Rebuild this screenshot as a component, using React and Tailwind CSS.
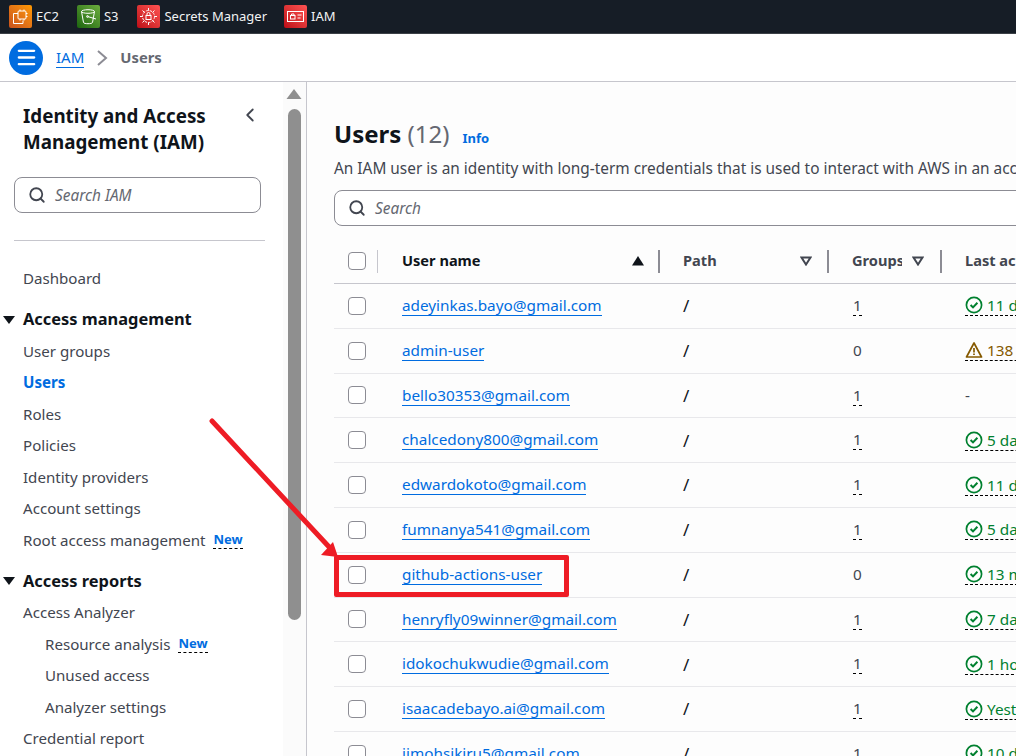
import { Menu, ChevronLeft, Search } from "lucide-react";

const usuarios = [
  { nome: "adeyinkas.bayo@gmail.com", grupos: "1", ativo: "11 days ago", status: "ok" },
  { nome: "admin-user", grupos: "0", ativo: "138 days ago", status: "aviso" },
  { nome: "bello30353@gmail.com", grupos: "1", ativo: "-", status: "nenhum" },
  { nome: "chalcedony800@gmail.com", grupos: "1", ativo: "5 days ago", status: "ok" },
  { nome: "edwardokoto@gmail.com", grupos: "1", ativo: "11 days ago", status: "ok" },
  { nome: "fumnanya541@gmail.com", grupos: "1", ativo: "5 days ago", status: "ok" },
  { nome: "github-actions-user", grupos: "0", ativo: "13 minutes ago", status: "ok" },
  { nome: "henryfly09winner@gmail.com", grupos: "1", ativo: "7 days ago", status: "ok" },
  { nome: "idokochukwudie@gmail.com", grupos: "1", ativo: "1 hour ago", status: "ok" },
  { nome: "isaacadebayo.ai@gmail.com", grupos: "1", ativo: "Yesterday", status: "ok" },
  { nome: "jimohsikiru5@gmail.com", grupos: "1", ativo: "10 days ago", status: "ok" },
];

function ServiceIcon({ cor, children }) {
  return (
    <span className={`flex h-[23px] w-[23px] shrink-0 items-center justify-center rounded-[2px] ${cor}`}>
      <svg width="19" height="19" viewBox="0 0 19 19" fill="none" stroke="#ffffff" strokeWidth="1">
        {children}
      </svg>
    </span>
  );
}

function Service({ cor, label, icon, className }) {
  return (
    <div className={`flex items-center gap-[4px] ${className}`}>
      <ServiceIcon cor={cor}>{icon}</ServiceIcon>
      <span className="text-[13px] text-[#f2f3f3]">{label}</span>
    </div>
  );
}

function NavItem({ children, sub, ativo, novo }) {
  return (
    <div className={`flex h-[31.5px] items-center text-[15.1px] ${sub ? "pl-[45px]" : "pl-[23px]"} ${ativo ? "font-bold text-[#006ce0]" : "text-[#424650]"}`}>
      {children}
      {novo && (
        <span className={`border-b border-dashed border-black text-[13px] leading-[17px] font-bold text-[#006ce0] ${novo}`}>
          New
        </span>
      )}
    </div>
  );
}

function NavHeader({ children, className }) {
  return (
    <div className={`flex h-[32px] items-center text-[16.4px] font-bold text-[#0f141a] ${className}`}>
      <svg width="14" height="10" viewBox="0 0 14 10" className="ml-[2px] mr-[7px]">
        <path d="M1 1h12L7 9z" fill="#0f141a" />
      </svg>
      {children}
    </div>
  );
}

function Checkbox() {
  return <span className="block h-[18px] w-[18px] rounded-[4px] border border-[#8c8c94] bg-white" />;
}

function FilterIcon() {
  return (
    <svg width="12" height="10" viewBox="0 0 12 10" fill="none" stroke="#424650" strokeWidth="2">
      <path d="M1.5 1.5h9L6 8.5z" />
    </svg>
  );
}

function StatusIcon({ status }) {
  if (status === "aviso") {
    return (
      <svg width="18" height="18" viewBox="0 0 18 18" fill="none" stroke="#855900" strokeWidth="1.7">
        <path d="M9 2 1.5 16h15z" strokeLinejoin="round" />
        <path d="M9 7v4.5M9 12.6v1.4" />
      </svg>
    );
  }
  return (
    <svg width="18" height="18" viewBox="0 0 18 18" fill="none" stroke="#00802f" strokeWidth="1.7">
      <circle cx="9" cy="9" r="7.6" />
      <path d="m5.6 9 2.4 2.4 4.4-4.6" strokeWidth="2" />
    </svg>
  );
}

export default function App() {
  return (
    <div className="relative h-[756px] w-[1016px] overflow-hidden bg-white font-['Noto_Sans',sans-serif]">
      <div className="flex h-[34px] items-center border-b border-[#3b4046] bg-[#161d26] pl-[9px]">
        <Service
          cor="bg-gradient-to-tr from-[#c8511b] to-[#f90]"
          label="EC2"
          className="mr-[18px]"
          icon={
            <>
              <rect x="7" y="4" width="8" height="8" rx="1" />
              <path d="M9 4V2.5M13 4V2.5M9 12v1.5M13 12v1.5M15 6.5h1.5M15 9.5h1.5M7 6.5H2.5v10H12v-3" />
            </>
          }
        />
        <Service
          cor="bg-gradient-to-tr from-[#1b660f] to-[#6cae3e]"
          label="S3"
          className="mr-[19px]"
          icon={
            <>
              <ellipse cx="9" cy="4.5" rx="6.5" ry="1.8" />
              <path d="M2.5 4.5 4.5 15.5c.5 1.6 8.5 1.6 9 0l2-11" />
              <path d="M8.5 9.5 17 12" />
              <circle cx="8.5" cy="9.5" r=".9" />
            </>
          }
        />
        <Service
          cor="bg-gradient-to-tr from-[#bd0816] to-[#ff5252]"
          label="Secrets Manager"
          className="mr-[17px]"
          icon={
            <>
              <circle cx="9.5" cy="9.5" r="6" strokeDasharray="2.4 1.2" />
              <path d="M9.5 1v2.5M9.5 15.5V18M1 9.5h2.5M15.5 9.5H18M3.5 3.5l2 2M13.5 13.5l2 2M15.5 3.5l-2 2M5.5 13.5l-2 2" />
              <rect x="7" y="8.5" width="5" height="4" />
              <path d="M8 8.5V7a1.5 1.5 0 0 1 3 0v1.5" />
            </>
          }
        />
        <Service
          cor="bg-gradient-to-tr from-[#bd0816] to-[#ff5252]"
          label="IAM"
          icon={
            <>
              <rect x="1.5" y="4.5" width="16" height="10" />
              <rect x="4.5" y="8.5" width="4.5" height="3.5" />
              <path d="M5.5 8.5V7h2.5v1.5M11.5 8h4M11.5 11h3" />
            </>
          }
        />
      </div>

      <div className="flex h-[48px] items-center border-b border-[#c6c6cd] pl-[9px]">
        <span className="flex h-[34px] w-[34px] items-center justify-center rounded-full bg-[#006ce0]">
          <Menu size={23} color="#ffffff" strokeWidth={2.4} />
        </span>
        <span className="mb-[1px] ml-[13px] border-b border-[#006ce0] text-[15px] leading-[20px] text-[#006ce0]">IAM</span>
        <svg width="12" height="18" viewBox="0 0 12 18" fill="none" stroke="#8c8c94" strokeWidth="2" className="mr-[12px] ml-[12px]">
          <path d="M2 2l8 7-8 7" />
        </svg>
        <span className="mb-[1px] text-[14.8px] font-bold text-[#656871]">Users</span>
      </div>

      <div className="flex h-[674px]">
        <aside className="w-[283px] shrink-0 bg-white">
          <div className="flex justify-between pt-[22px] pr-[22px] pl-[23px]">
            <h2 className="text-[18.8px] leading-[25.5px] font-bold text-[#0f141a]">
              Identity and Access
              <br />
              Management (IAM)
            </h2>
            <ChevronLeft size={22} color="#424650" strokeWidth={2} />
          </div>
          <div className="mx-[14px] mt-[22px] flex h-[36px] w-[247px] items-center rounded-[8px] border border-[#8c8c94] pl-[13px]">
            <Search size={18} color="#424650" strokeWidth={2.4} />
            <span className="mt-[2px] ml-[9px] text-[15.4px] text-[#656871] italic">Search IAM</span>
          </div>
          <div className="mx-[14px] mt-[27px] h-px w-[251px] bg-[#c6c6cd]" />
          <div className="pt-[22px]">
            <NavItem>Dashboard</NavItem>
            <NavHeader className="mt-[9px]">Access management</NavHeader>
            <NavItem>User groups</NavItem>
            <NavItem ativo>Users</NavItem>
            <NavItem>Roles</NavItem>
            <NavItem>Policies</NavItem>
            <NavItem>Identity providers</NavItem>
            <NavItem>Account settings</NavItem>
            <NavItem novo="ml-[8px]">Root access management</NavItem>
            <NavHeader className="mt-[9px]">Access reports</NavHeader>
            <NavItem>Access Analyzer</NavItem>
            <NavItem sub novo="ml-[8px]">Resource analysis</NavItem>
            <NavItem sub>Unused access</NavItem>
            <NavItem sub>Analyzer settings</NavItem>
            <NavItem>Credential report</NavItem>
          </div>
        </aside>

        <div className="flex w-[23px] shrink-0 flex-col items-center bg-[#fbfbfb] pr-[1px]">
          <svg width="16" height="11" viewBox="0 0 16 11" className="mt-[7px]">
            <path d="M8 0l7.5 10H.5z" fill="#8f8f8f" />
          </svg>
          <div className="mt-[9px] h-[511px] w-[13px] rounded-full bg-[#8f8f8f]" />
        </div>

        <main className="w-[710px] shrink-0 overflow-hidden border-l border-[#c6c6cd] bg-[#fdfdfd] pl-[27px]">
          <div className="mt-[33px] flex h-[38px] items-center">
            <h1 className="text-[24px] font-bold whitespace-nowrap text-[#0f141a]">
              Users <span className="font-normal text-[#656871]">(12)</span>
            </h1>
            <span className="mt-[10px] ml-[13px] text-[13px] font-bold text-[#006ce0]">Info</span>
          </div>
          <p className="mt-[6px] text-[15.4px] leading-[20px] whitespace-nowrap text-[#424650]">
            An IAM user is an identity with long-term credentials that is used to interact with AWS in an account.
          </p>
          <div className="mt-[11px] flex h-[36px] w-[720px] items-center rounded-[8px] border border-[#8c8c94] bg-white pl-[13px]">
            <Search size={18} color="#424650" strokeWidth={2.4} />
            <span className="mt-[2px] ml-[9px] text-[15.4px] text-[#656871] italic">Search</span>
          </div>

          <div className="mt-[14px] w-[720px]">
            <div className="flex h-[44px] items-center border-b border-[#c6c6cd] pb-[1px] text-[14.6px] font-bold">
              <div className="flex w-[68px] shrink-0 items-center pl-[14px]">
                <Checkbox />
                <span className="ml-[11px] h-[23px] w-px bg-[#c6c6cd]" />
              </div>
              <div className="flex w-[258px] shrink-0 items-center justify-between text-[#0f141a]">
                User name
                <span className="flex items-center gap-[14px]">
                  <svg width="12" height="10" viewBox="0 0 12 10"><path d="M6 0l6 9.5H0z" fill="#0f141a" /></svg>
                  <span className="h-[23px] w-[2px] bg-[#8c8c94]" />
                </span>
              </div>
              <div className="flex w-[169px] shrink-0 items-center justify-between pl-[23px] text-[#424650]">
                Path
                <span className="flex items-center gap-[15px]">
                  <FilterIcon />
                  <span className="h-[23px] w-[2px] bg-[#8c8c94]" />
                </span>
              </div>
              <div className="flex w-[113px] shrink-0 items-center pl-[23px] text-[#424650]">
                <span className="w-[51px] overflow-hidden">Groups</span>
                <span className="ml-[10px]"><FilterIcon /></span>
                <span className="ml-[16px] h-[23px] w-[2px] bg-[#8c8c94]" />
              </div>
              <div className="pl-[23px] whitespace-nowrap text-[#424650]">Last activity</div>
            </div>

            {usuarios.map((u) => (
              <div key={u.nome} className="flex h-[44.8px] items-center border-b border-[#e8e8eb] text-[15.3px] text-[#0f141a]">
                <div className="w-[68px] shrink-0 pl-[14px]">
                  <Checkbox />
                </div>
                <div className="w-[258px] shrink-0 pb-[1px]">
                  <span className="border-b border-[#006ce0] leading-[20px] text-[#006ce0]">{u.nome}</span>
                </div>
                <div className="w-[169px] shrink-0 pl-[23px] text-[17px] text-[#0f141a]">/</div>
                <div className="w-[113px] shrink-0 pb-[1px] pl-[24px] text-[#424650]">
                  {u.grupos === "1" ? (
                    <span className="border-b border-dashed border-black leading-[20px]">1</span>
                  ) : (
                    u.grupos
                  )}
                </div>
                <div className="pl-[23px] whitespace-nowrap">
                  {u.status === "nenhum" ? (
                    <span className="text-[#424650]">-</span>
                  ) : (
                    <span className={`flex items-center gap-[4px] border-b border-dashed border-black leading-[20px] ${u.status === "ok" ? "text-[#00802f]" : "text-[#855900]"}`}>
                      <StatusIcon status={u.status} />
                      {u.ativo}
                    </span>
                  )}
                </div>
              </div>
            ))}
          </div>
        </main>
      </div>

      {/* anotacao por cima do print */}
      <svg width="1016" height="756" className="pointer-events-none absolute top-0 left-0">
        <path d="M212 421 331 549" stroke="#ee1c25" strokeWidth="5" strokeLinecap="round" />
        <path d="M338 557 321 555 333 542z" fill="#ee1c25" />
      </svg>
      <div className="absolute top-[555px] left-[334px] h-[42px] w-[235px] rounded-[2px] border-[5px] border-[#ee1c25]" />
    </div>
  );
}
